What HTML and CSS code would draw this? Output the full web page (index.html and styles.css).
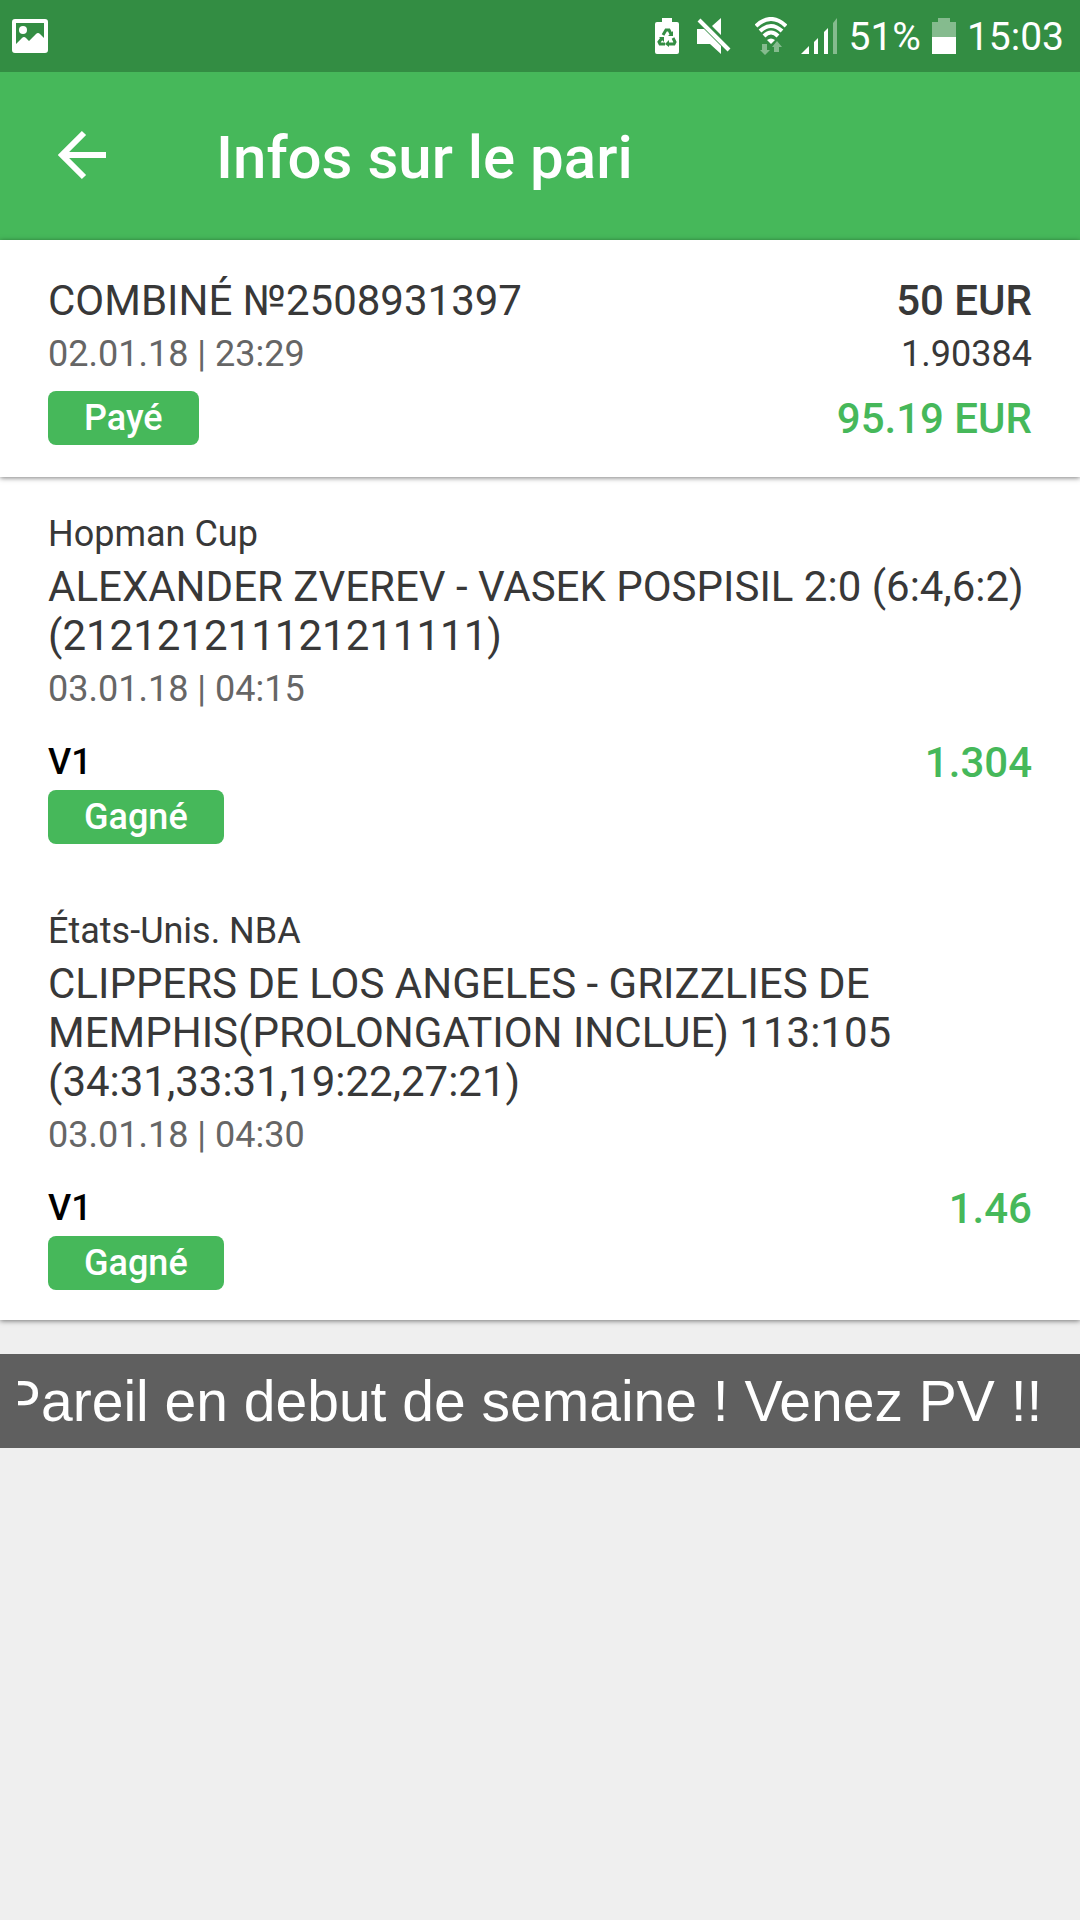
FILE: index.html
```html
<!DOCTYPE html>
<html lang="fr">
<head>
<meta charset="utf-8">
<title>Infos sur le pari</title>
<meta name="viewport" content="width=device-width, initial-scale=1">
<link rel="stylesheet" href="styles.css">
</head>
<body>
<div class="status-bar">
  <svg class="status-photo" width="36" height="34" viewBox="0 0 36 34"><path fill="#fff" fill-rule="evenodd" d="M3 0h30q3 0 3 3v28q0 3-3 3H3q-3 0-3-3V3q0-3 3-3zM4 4v21l6-6q2-2 4 0l3 3 7-7q2-2 4 0l4 4V4z"/><circle cx="11" cy="11" r="4" fill="#fff"/></svg>
  <div class="status-icons">
    <svg width="24" height="36" viewBox="0 0 24 36"><path fill="#fff" d="M7 0h10v4h5q2 0 2 2v28q0 2-2 2H2q-2 0-2-2V6q0-2 2-2h5z"/><path d="M8 17l3-5h3l2 4M18 20l2 4-1 2h-6M10 26H5l-1-2 3-4" fill="none" stroke="#338d43" stroke-width="3"/><path d="M18 13v5h-5zM14 22v7l-4-3zM4 19h5v5z" fill="#338d43"/></svg>
    <svg width="34" height="36" viewBox="0 0 34 36"><path fill="#fff" d="M0 11h7l17 17v8L13 26H0zM15 8l9-8v17z"/><path d="M2 2l30 30" stroke="#fff" stroke-width="4"/></svg>
    <svg class="wifi" width="32" height="38" viewBox="0 0 32 38"><path d="M1 9q15-14 30 0M5 14q11-10 22 0M9 19q7-7 14 0" fill="none" stroke="#fff" stroke-width="4"/><path fill="#fff" d="M12 23q4-3 8 0l-4 4z"/><path fill="#85bb8e" d="M7 27h5v6h3l-5 5-5-5h2zM19 35h5v-5h3l-5-6-5 6h2z"/></svg>
    <svg width="36" height="36" viewBox="0 0 36 36"><path fill="#fff" d="M0 36l8-8v8zM13 24l4-4v16h-4zM23 14l4-4v26h-4z"/><path fill="#85bb8e" d="M32 5l4-5v36h-4z"/></svg>
  </div>
  <span class="status-text">51%</span>
  <svg width="24" height="36" viewBox="0 0 24 36"><path fill="#85bb8e" d="M6 0h12v4h6v15H0V4h6z"/><path fill="#fff" d="M0 19h24v17H0z"/></svg>
  <span class="status-text">15:03</span>
</div>
<header class="app-bar">
  <button class="back" aria-label="Retour"><svg width="50" height="50" viewBox="0 0 50 50"><path d="M50 25H6M28 3L6 25l22 22" fill="none" stroke="#fff" stroke-width="6"/></svg></button>
  <h1 class="title">Infos sur le pari</h1>
</header>
<main>
  <section class="summary">
    <div class="row"><span class="name">COMBINÉ №2508931397</span><span class="stake">50 EUR</span></div>
    <div class="row"><span class="date">02.01.18 | 23:29</span><span class="odds">1.90384</span></div>
    <div class="row payout"><span class="badge">Payé</span><span class="value">95.19 EUR</span></div>
  </section>
  <section class="events">
    <article class="event">
      <p class="league">Hopman Cup</p>
      <h2 class="match">ALEXANDER ZVEREV - VASEK POSPISIL 2:0 (6:4,6:2) (212121211121211111)</h2>
      <p class="date">03.01.18 | 04:15</p>
      <div class="row pick-row"><span class="pick">V1</span><span class="value">1.304</span></div>
      <span class="badge">Gagné</span>
    </article>
    <article class="event">
      <p class="league">États-Unis. NBA</p>
      <h2 class="match">CLIPPERS DE LOS ANGELES - GRIZZLIES DE MEMPHIS(PROLONGATION INCLUE) 113:105 (34:31,33:31,19:22,27:21)</h2>
      <p class="date">03.01.18 | 04:30</p>
      <div class="row pick-row"><span class="pick">V1</span><span class="value">1.46</span></div>
      <span class="badge">Gagné</span>
    </article>
  </section>
  <div class="banner"><p class="banner-text">Pareil en debut de semaine ! Venez PV !!</p></div>
</main>
</body>
</html>
```
FILE: styles.css
```css
* { box-sizing: border-box; margin: 0; }
body { background: #efefef; color: #383838; font-family: Roboto, sans-serif; }

.status-bar { display: flex; align-items: center; height: 72px; padding: 0 16px 0 12px; gap: 11px; background: #338d43; color: #fff; }
.status-icons { display: flex; align-items: center; gap: 18px; margin-left: auto; }
.status-icons .wifi { margin: 0 -4px 0 6px; }
.status-text { padding-top: 2px; font-size: 39px; }

.app-bar { display: flex; align-items: center; height: 168px; padding: 2px 56px 0; background: #46b85a; color: #fff; }
.back { display: flex; width: 160px; padding: 0 0 4px; border: 0; background: none; }
.title { font-size: 60px; font-weight: 500; }

.summary, .events { padding: 29px 48px 30px; background: #fff; box-shadow: 0 1px 5px rgba(0, 0, 0, 0.5); }
.summary { position: relative; padding: 36px 48px 32px; }
.row { display: flex; justify-content: space-between; align-items: center; }
.payout { margin-top: 8px; }
.pick-row { margin-top: 16px; }
.event + .event { margin-top: 59px; }

.name, .stake, .match, .value { font-size: 42px; line-height: 49px; font-weight: 400; }
.stake { font-weight: 500; }
.value { font-weight: 500; color: #46b85a; }
.date, .odds, .league, .pick { font-size: 36px; line-height: 56px; }
.date, .odds { line-height: 58px; }
.date { color: #666; }
.pick { font-weight: 500; color: #000; }
.badge { display: block; width: fit-content; padding: 0 36px; border-radius: 8px; background: #46b85a; color: #fff; font-size: 36px; font-weight: 500; line-height: 54px; }

.banner { margin-top: 34px; padding: 0 18px; background: #5f5f5f; color: #fff; }
.banner-text { overflow: hidden; font-family: "Liberation Sans", sans-serif; font-size: 57px; line-height: 94px; text-indent: -15px; white-space: nowrap; }
```
